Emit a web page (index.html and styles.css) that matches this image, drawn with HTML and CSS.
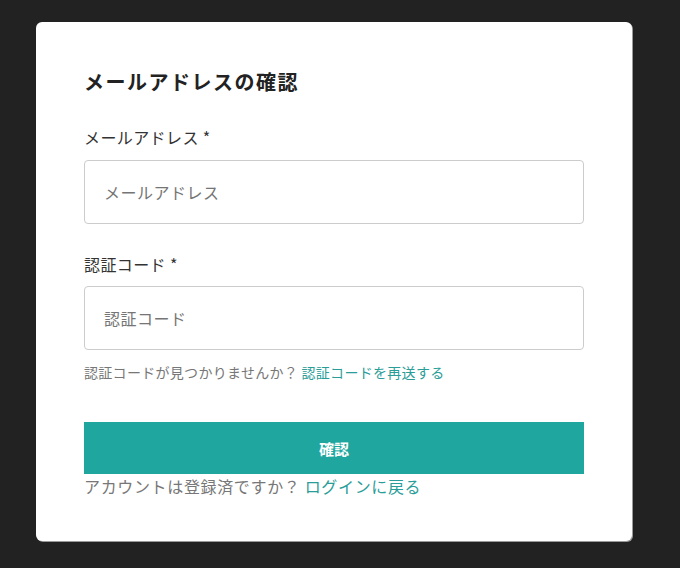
FILE: index.html
```html
<!DOCTYPE html>
<html lang="ja">
<head>
<meta charset="utf-8">
<title>メールアドレスの確認</title>
<link rel="stylesheet" href="styles.css">
</head>
<body>
<main class="card">
  <h1 class="title">メールアドレスの確認</h1>
  <form class="form">
    <label class="label" for="email">メールアドレス *</label>
    <input class="field" id="email" type="text" placeholder="メールアドレス">
    <label class="label label-second" for="code">認証コード *</label>
    <input class="field" id="code" type="text" placeholder="認証コード">
    <p class="helper">認証コードが見つかりませんか？ <a class="link" href="#">認証コードを再送する</a></p>
    <button class="submit" type="button">確認</button>
    <p class="footer">アカウントは登録済ですか？ <a class="link" href="#">ログインに戻る</a></p>
  </form>
</main>
</body>
</html>
```
FILE: styles.css
```css
* { box-sizing: border-box; }
html, body { margin: 0; padding: 0; }
body {
  background: #222222;
  font-family: "Noto Sans CJK JP", "Noto Sans", sans-serif;
  color: #333333;
  padding: 22px 0 0 36px;
  min-height: 568px;
}
.card {
  width: 596px;
  height: 519px;
  background: #ffffff;
  border-radius: 6px;
  padding: 46px 48px 42px;
  box-shadow: 1px 1px 0 #9a9a9a;
}
.title {
  margin: 0;
  font-size: 20px;
  line-height: 28px;
  font-weight: 700;
  letter-spacing: 1.5px;
  color: #222222;
}
.form {
  display: flex;
  flex-direction: column;
  margin: 29px 0 0;
}
.label {
  font-size: 16px;
  line-height: 24px;
  letter-spacing: 0.4px;
  color: #333333;
  margin-bottom: 11px;
}
.label-second { margin-top: 28px; margin-bottom: 10px; }
.field {
  width: 500px;
  height: 64px;
  border: 1px solid #cccccc;
  border-radius: 4px;
  padding: 0 19px;
  font: inherit;
  font-size: 16px;
  letter-spacing: 0.5px;
  color: #333333;
  background: #ffffff;
  outline: none;
}
.field::placeholder { color: #757575; opacity: 1; }
.helper {
  margin: 12px 0 0;
  font-size: 14px;
  line-height: 20px;
  letter-spacing: 0.3px;
  color: #777777;
}
.link { color: #2a9d98; text-decoration: none; }
.submit {
  margin-top: 40px;
  width: 500px;
  height: 52px;
  border: none;
  border-radius: 0;
  background: #1fa69e;
  color: #ffffff;
  font: inherit;
  font-size: 15px;
  font-weight: 700;
  cursor: pointer;
}
.footer {
  margin: 0;
  font-size: 16px;
  line-height: 24px;
  letter-spacing: 0.65px;
  color: #777777;
}
```
